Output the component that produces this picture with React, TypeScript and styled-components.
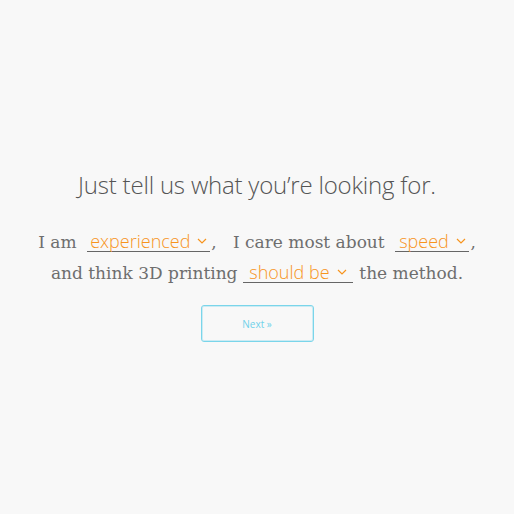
import React from "react";
import styled, { createGlobalStyle } from "styled-components";

const Global = createGlobalStyle`
  html, body { margin: 0; padding: 0; background: #f8f8f8; }
  body { width: 514px; height: 514px; }
`;

const Page = styled.main`
  width: 514px;
  height: 514px;
  display: flex;
  flex-direction: column;
  align-items: center;
  padding-top: 168px;
  box-sizing: border-box;
`;

const Title = styled.h1`
  margin: 0;
  height: 34px;
  font-family: "Open Sans", sans-serif;
  font-weight: 300;
  font-size: 24px;
  line-height: 34px;
  color: #555;
  letter-spacing: -0.2px;
`;

const Sentence = styled.p`
  margin: 25px 0 0;
  width: 480px;
  height: 62px;
  text-align: center;
  font-family: "DejaVu Serif", serif;
  font-size: 17px;
  line-height: 31px;
  color: #6e6e6e;
`;

const Select = styled.span<{ $w: number }>`
  display: inline-flex;
  align-items: baseline;
  justify-content: center;
  box-sizing: border-box;
  width: ${(p) => p.$w}px;
  margin: 0 1px 0 0;
  padding: 0;
  border-bottom: 1px solid #666;
  line-height: 19px;
  font-family: "Open Sans", sans-serif;
  font-weight: 300;
  font-size: 18px;
  color: #f7941d;
  vertical-align: baseline;
`;

const Chevron = styled.svg`
  flex-shrink: 0;
  width: 10px;
  height: 6px;
  margin-left: 7px;
  align-self: center;
  position: relative;
  top: -1px;
`;

const NextButton = styled.button`
  flex-shrink: 0;
  appearance: none;
  margin-top: 16px;
  width: 113px;
  height: 37px;
  background: transparent;
  border: 1px solid #7ad5ea;
  box-shadow: inset 0 0 0 1px rgba(122, 213, 234, 0.35);
  border-radius: 3px;
  color: #6fd2ea;
  font-family: "Open Sans", sans-serif;
  font-size: 10px;
  font-weight: 400;
  cursor: pointer;
`;

function Dropdown({ label, w }: { label: string; w: number }) {
  return (
    <Select $w={w}>
      {label}
      <Chevron viewBox="0 0 10 6">
        <path d="M1 1 L5 5 L9 1" fill="none" stroke="#f7941d" strokeWidth="1.2" />
      </Chevron>
    </Select>
  );
}

export default function App() {
  return (
    <>
      <Global />
      <Page>
        <Title>Just tell us what you’re looking for.</Title>
        <Sentence>
          I am&nbsp; <Dropdown label="experienced" w={123} />,&nbsp;&nbsp; I care most about&nbsp;{" "}
          <Dropdown label="speed" w={74} />,<br />
          and think 3D printing <Dropdown label="should be" w={110} /> the method.
        </Sentence>
        <NextButton>Next »</NextButton>
      </Page>
    </>
  );
}
